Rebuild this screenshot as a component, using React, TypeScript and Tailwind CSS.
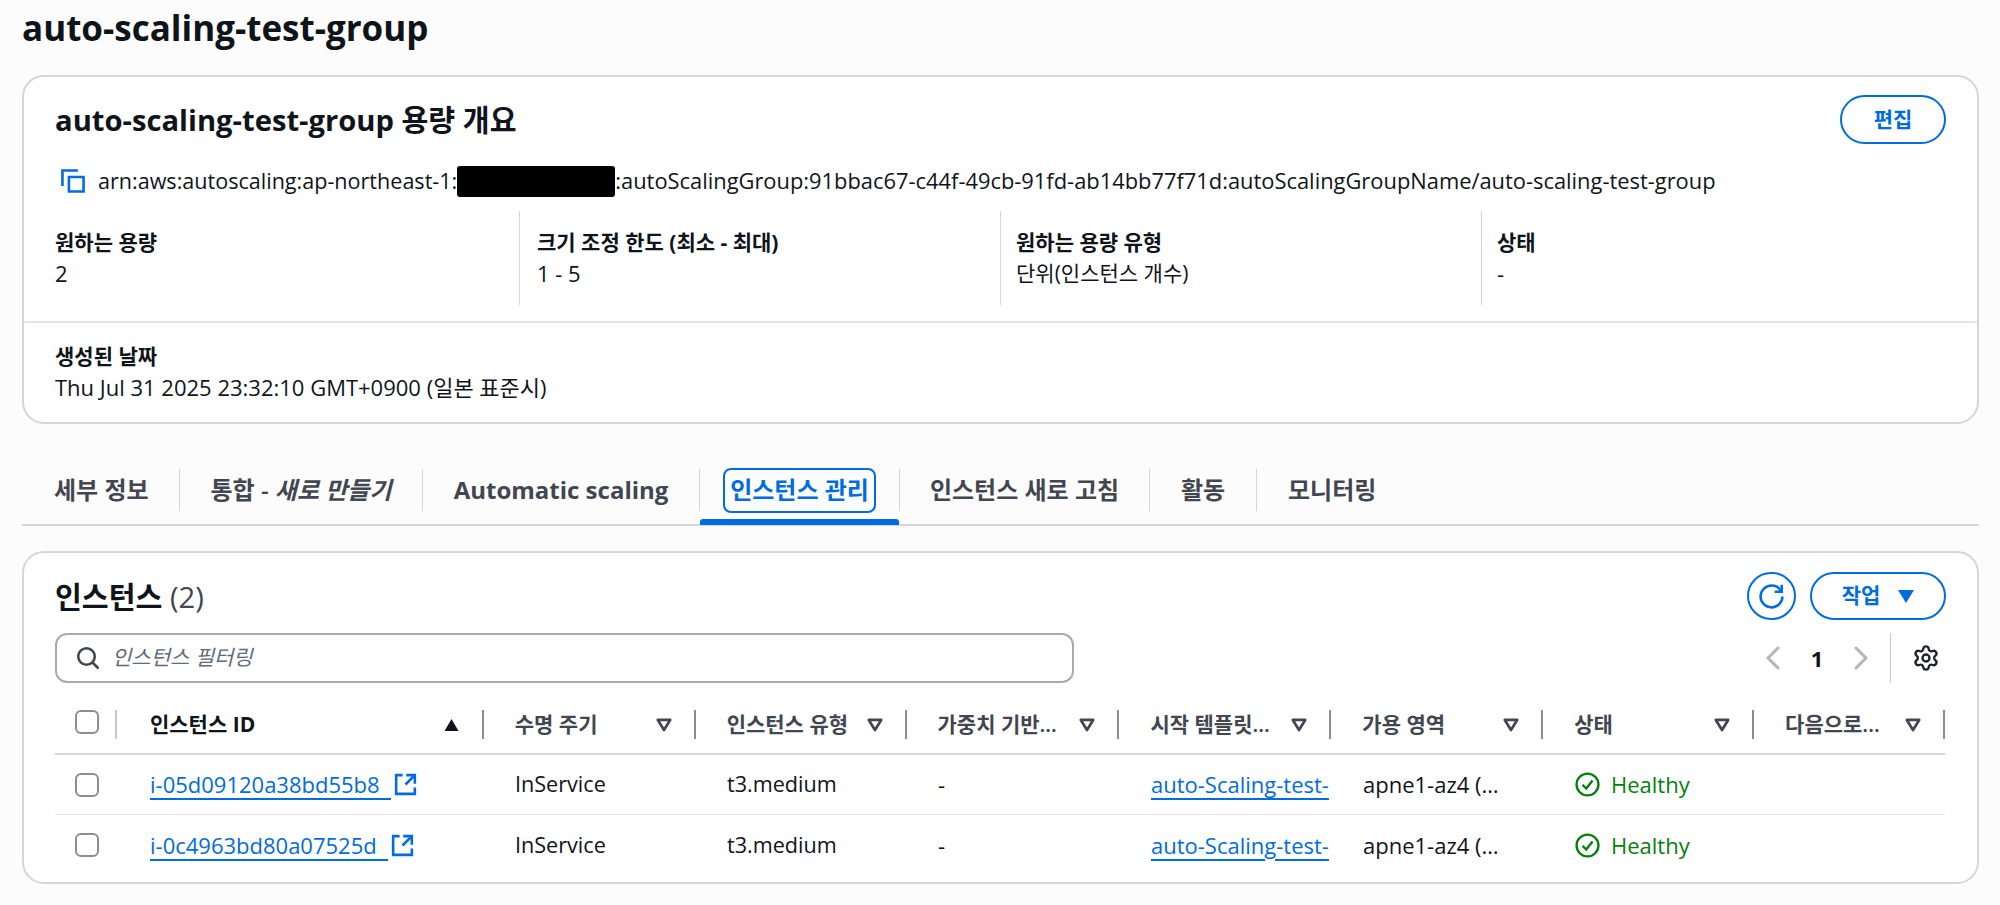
import { Settings, ChevronLeft, ChevronRight } from "lucide-react";

const FONT = "[font-family:'Open_Sans','Noto_Sans_CJK_KR',sans-serif]";

const tabs = [
  { label: "세부 정보", width: "w-[158px]", pad: "pl-[32px]" },
  { label: "통합 - ", italic: "새로 만들기", width: "w-[243px]", pad: "justify-center" },
  { label: "Automatic scaling", width: "w-[277px]", pad: "justify-center", bold: true },
  { label: "인스턴스 관리", width: "w-[200px]", pad: "justify-center", active: true },
  { label: "인스턴스 새로 고침", width: "w-[250px]", pad: "justify-center" },
  { label: "활동", width: "w-[107px]", pad: "justify-center" },
  { label: "모니터링", width: "w-[150px]", pad: "pl-[31px]", last: true },
];

const columns = [
  { label: "수명 주기", width: "w-[212px]" },
  { label: "인스턴스 유형", width: "w-[211px]" },
  { label: "가중치 기반...", width: "w-[213px]" },
  { label: "시작 템플릿...", width: "w-[212px]" },
  { label: "가용 영역", width: "w-[212px]" },
  { label: "상태", width: "w-[211px]" },
  { label: "다음으로...", width: "w-[191px]" },
];

const rows = [
  { id: "i-05d09120a38bd55b8" },
  { id: "i-0c4963bd80a07525d" },
];

const CopyIcon = () => (
  <svg width="26" height="26" viewBox="0 0 16 16" fill="none" stroke="#006ce0" strokeWidth="1.6" className="shrink-0">
    <path d="M1.5 11V1.5H11" />
    <path d="M5.5 5.5h9v9h-9z" />
  </svg>
);

const ExternalIcon = () => (
  <svg width="23" height="23" viewBox="0 0 16 16" fill="none" stroke="#006ce0" strokeWidth="1.8" className="shrink-0">
    <path d="M14.5 7.5V1.5H8.5" />
    <path d="M14.5 1.5 8 8" />
    <path d="M6 1.5H1.5v13h13V10" />
  </svg>
);

const RefreshIcon = () => (
  <svg width="25" height="25" viewBox="0 0 16 16" fill="none" stroke="#006ce0" strokeWidth="1.6">
    <path d="M15 8c0 3.87-3.13 7-7 7s-7-3.13-7-7 3.13-7 7-7c2.79 0 5.2 1.63 6.33 4" />
    <path d="M14.54.5v4.5h-4.5" />
  </svg>
);

const SearchIcon = () => (
  <svg width="24" height="24" viewBox="0 0 16 16" fill="none" stroke="#424650" strokeWidth="1.7" className="shrink-0">
    <circle cx="7" cy="7" r="5.5" />
    <path d="M11 11l4 4" />
  </svg>
);

const FilterCaret = () => (
  <svg width="18" height="18" viewBox="0 0 16 16" fill="none" stroke="#424650" strokeWidth="2.4" strokeLinejoin="round" className="shrink-0">
    <path d="M2.5 3.5h11L8 12.5z" />
  </svg>
);

const SortCaret = () => (
  <svg width="17" height="16" viewBox="0 0 16 16" fill="#0f141a" className="shrink-0">
    <path d="M8 2l7 12H1z" />
  </svg>
);

const HealthyIcon = () => (
  <svg width="25" height="25" viewBox="0 0 16 16" fill="none" stroke="#037f0c" strokeWidth="1.5" className="shrink-0">
    <circle cx="8" cy="8" r="7" />
    <path d="M4.8 8.2 7.2 10.6 11.2 5.4" />
  </svg>
);

const Checkbox = () => (
  <div className="w-6 h-6 rounded-[6px] border-2 border-[#8c8c94] bg-white" />
);

const Field = ({ label, value, cls, size }: { label: string; value: string; cls: string; size: string }) => (
  <div className={cls}>
    <div className="h-[31px] leading-[31px] font-bold text-[21px]">{label}</div>
    <div className={`h-[31px] leading-[31px] ${size}`}>{value}</div>
  </div>
);

const App = () => {
  return (
    <div className={`${FONT} w-[2000px] h-[905px] overflow-hidden bg-[#fcfcfc] pl-[22px] pr-[21px] text-[#0f141a] text-[22px]`}>
      <h1 className="h-[75px] pb-[19px] flex items-center text-[35px] font-bold">auto-scaling-test-group</h1>

      <div className="h-[349px] bg-white border-2 border-[#d6d6da] rounded-[22px]">
        <div className="pl-[31px] pr-[31px] pt-[18px] flex justify-between items-start h-[88px]">
          <h2 className="text-[29.2px] font-bold leading-[50px]">auto-scaling-test-group 용량 개요</h2>
          <button className="w-[106px] h-[49px] rounded-full border-2 border-[#006ce0] text-[#006ce0] font-bold text-[21px]">편집</button>
        </div>

        <div className="pl-[36px] h-[32px] flex items-center gap-[12px]">
          <CopyIcon />
          <div className="flex items-center whitespace-nowrap">
            <span className="text-[21.57px]">arn:aws:autoscaling:ap-northeast-1:</span>
            <span className="w-[158px] h-[31px] bg-black rounded-[3px] shrink-0" />
            <span className="text-[21.88px]">:autoScalingGroup:91bbac67-c44f-49cb-91fd-ab14bb77f71d:autoScalingGroupName/auto-scaling-test-group</span>
          </div>
        </div>

        <div className="mt-[14px] pl-[31px] grid grid-cols-[465px_481px_481px_1fr] h-[94px]">
          <Field cls="pt-[16px] border-r border-[#d6d6da]" label="원하는 용량" value="2" size="text-[22px]" />
          <Field cls="pt-[16px] pl-[17px] border-r border-[#d6d6da]" label="크기 조정 한도 (최소 - 최대)" value="1 - 5" size="text-[22px]" />
          <Field cls="pt-[16px] pl-[15px] border-r border-[#d6d6da]" label="원하는 용량 유형" value="단위(인스턴스 개수)" size="text-[21px]" />
          <Field cls="pt-[16px] pl-[15px]" label="상태" value="-" size="text-[22px]" />
        </div>

        <div className="mt-[16px] h-[2px] bg-[#e4e4e8]" />

        <Field cls="pl-[31px] pt-[18px]" label="생성된 날짜" value="Thu Jul 31 2025 23:32:10 GMT+0900 (일본 표준시)" size="text-[22px]" />
      </div>

      <div className="mt-[45px] h-[57px] flex items-start border-b-2 border-[#d6d6da]">
        {tabs.map((tab) => (
          <div
            key={tab.label}
            className={`relative ${tab.width} ${tab.pad} h-[42px] flex items-center text-[24px] ${tab.bold ? "font-bold" : "font-semibold"} ${tab.last ? "" : "border-r border-[#d6d6da]"} ${tab.active ? "text-[#006ce0]" : "text-[#424650]"}`}
          >
            {tab.active ? (
              <span className="h-[45px] w-[153px] flex items-center justify-center rounded-[8px] border-[2.5px] border-[#006ce0] bg-[#fcfcfc] whitespace-nowrap">
                {tab.label}
              </span>
            ) : (
              <span className="whitespace-pre">
                {tab.label}
                {tab.italic && <em className="font-semibold">{tab.italic}</em>}
              </span>
            )}
            {tab.active && <div className="absolute left-0 right-0 top-[50px] h-[6px] rounded-t-[3px] bg-[#006ce0]" />}
          </div>
        ))}
      </div>

      <div className="mt-[25px] h-[333px] bg-white border-2 border-[#d6d6da] rounded-[22px]">
        <div className="pl-[31px] pr-[31px] pt-[19px] flex justify-between items-start h-[80px]">
          <h2 className="text-[29.2px] font-bold leading-[50px]">
            인스턴스 <span className="font-normal text-[#424650]">(2)</span>
          </h2>
          <div className="flex gap-[14px]">
            <button className="w-[49px] h-[48px] rounded-full border-2 border-[#006ce0] flex items-center justify-center">
              <RefreshIcon />
            </button>
            <button className="w-[136px] h-[48px] rounded-full border-2 border-[#006ce0] text-[#006ce0] font-bold text-[21px] flex items-center justify-center gap-[18px]">
              작업
              <svg width="16" height="13" viewBox="0 0 16 13" fill="#006ce0"><path d="M0 0h16L8 13z" /></svg>
            </button>
          </div>
        </div>

        <div className="pl-[31px] pr-[32px] flex justify-between h-[77px]">
          <div className="w-[1019px] h-[50px] rounded-[12px] border-2 border-[#a9a9b0] bg-white flex items-center pl-[19px] gap-[12px] italic text-[21px] text-[#5f6b7a]">
            <SearchIcon />
            <span>인스턴스 필터링</span>
          </div>
          <div className="h-[50px] flex items-center pr-[5px]">
            <ChevronLeft size={40} strokeWidth={1.8} className="text-[#b4b4bb]" />
            <span className="w-[48px] text-center font-bold">1</span>
            <ChevronRight size={40} strokeWidth={1.8} className="text-[#b4b4bb]" />
            <div className="ml-[9px] h-[50px] w-px bg-[#c6c6cd]" />
            <Settings size={28} strokeWidth={2} className="ml-[21px] text-[#1f2329]" />
          </div>
        </div>

        <div className="ml-[31px] mr-[32px]">
          <div className="h-[45px] flex items-start border-b-2 border-[#d6d6da]">
            <div className="w-[62px] h-[29px] pl-[20px] border-r-2 border-[#c6c6cd]">
              <Checkbox />
            </div>
            <div className="w-[367px] h-[29px] pl-[33px] pr-[22px] flex items-center justify-between border-r-2 border-[#8c8c94] font-bold text-[21px]">
              <span>인스턴스 ID</span>
              <SortCaret />
            </div>
            {columns.map((col) => (
              <div
                key={col.label}
                className={`${col.width} h-[29px] pl-[31px] pr-[21px] flex items-center justify-between border-r-2 border-[#8c8c94] font-semibold text-[21px] text-[#424650]`}
              >
                <span className="whitespace-nowrap">{col.label}</span>
                <FilterCaret />
              </div>
            ))}
          </div>

          {rows.map((row, idx) => (
            <div key={row.id} className={`h-[60px] flex items-center ${idx === 0 ? "border-b border-[#e8e8ec]" : ""}`}>
              <div className="w-[62px] pl-[20px]">
                <Checkbox />
              </div>
              <div className="w-[367px] pl-[33px] flex items-center gap-[3px]">
                <a className="text-[#006ce0] underline underline-offset-[5px] whitespace-pre">{row.id + "  "}</a>
                <ExternalIcon />
              </div>
              <div className="w-[212px] pl-[31px] text-[21.6px]">InService</div>
              <div className="w-[211px] pl-[31px] text-[21.6px]">t3.medium</div>
              <div className="w-[213px] pl-[31px]">-</div>
              <div className="w-[212px] pl-[31px]">
                <a className="text-[#006ce0] underline underline-offset-[5px] whitespace-nowrap">auto-Scaling-test-</a>
              </div>
              <div className="w-[212px] pl-[31px] whitespace-nowrap">apne1-az4 (…</div>
              <div className="w-[211px] pl-[31px] flex items-center gap-[11px] text-[#037f0c]">
                <HealthyIcon />
                Healthy
              </div>
            </div>
          ))}
        </div>
      </div>
    </div>
  );
};

export default App;
